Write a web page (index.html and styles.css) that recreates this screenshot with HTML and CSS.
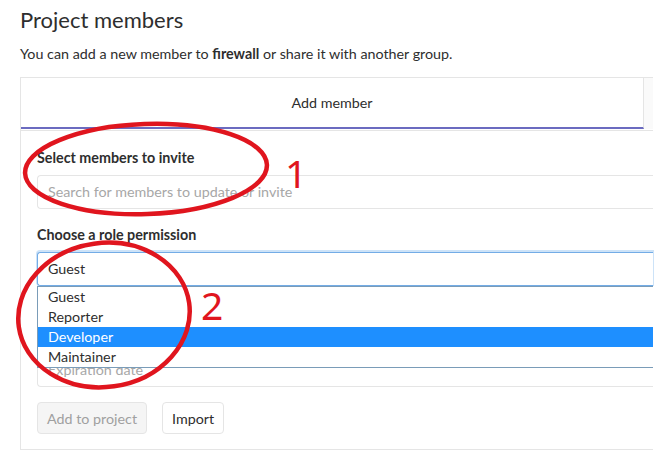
FILE: index.html
```html
<!DOCTYPE html>
<html>
<head>
<meta charset="utf-8">
<link rel="stylesheet" href="styles.css">
</head>
<body>
<h1 class="title">Project members</h1>
<p class="lead">You can add a new member to <strong>firewall</strong> or share it with another group.</p>
<div class="card">
  <div class="tabs">
    <div class="tab tab-active">Add member</div>
    <div class="tab tab-rest"></div>
  </div>
  <div class="card-body">
    <div class="label">Select members to invite</div>
    <div class="input placeholder">Search for members to update or invite</div>
    <div class="label">Choose a role permission</div>
    <div class="select-wrap">
      <div class="select">Guest</div>
      <ul class="dropdown">
        <li class="option">Guest</li>
        <li class="option">Reporter</li>
        <li class="option option-selected">Developer</li>
        <li class="option">Maintainer</li>
      </ul>
    </div>
    <div class="input placeholder expiry">Expiration date</div>
    <div class="actions">
      <button class="btn btn-disabled" disabled>Add to project</button>
      <button class="btn">Import</button>
    </div>
  </div>
</div>
<svg class="annot" width="664" height="468" viewBox="0 0 664 468">
  <ellipse cx="146" cy="169" rx="121" ry="45" transform="rotate(-2 146 169)" class="ring"/>
  <ellipse cx="104" cy="315" rx="86" ry="72" transform="rotate(-8 104 315)" class="ring"/>
  <text x="285" y="188" class="num">1</text>
  <text x="201" y="320" class="num">2</text>
</svg>
</body>
</html>
```
FILE: styles.css
```css
html, body {
  margin: 0;
  padding: 0;
  background: #fff;
}
body {
  font-family: Lato, "Noto Sans", sans-serif;
  color: #2e2e2e;
  padding-left: 20px;
  position: relative;
  height: 468px;
  overflow: hidden;
}
.title {
  margin: 0;
  padding-top: 5px;
  font-size: 22px;
  font-weight: 400;
  line-height: 30px;
}
.lead {
  margin: 9px 0 0;
  font-size: 14.3px;
  line-height: 20px;
}
.lead strong {
  font-weight: 700;
}
.card {
  margin-top: 13px;
  width: 633px;
  border: 1px solid #e5e5e5;
  border-right: none;
  height: 373px;
  box-sizing: border-box;
}
.tabs {
  display: flex;
  height: 52px;
  border-bottom: 1px solid #e5e5e5;
}
.tab {
  box-sizing: border-box;
  height: 51px;
}
.tab-active {
  width: 623px;
  border-right: 1px solid #e5e5e5;
  border-bottom: 2px solid #6b6bc0;
  display: flex;
  align-items: center;
  justify-content: center;
  font-size: 14.3px;
}
.tab-rest {
  flex: 1;
  background: #fafafa;
}
.card-body {
  padding: 17px 0 0 16px;
}
.label {
  font-size: 14.3px;
  font-weight: 700;
  line-height: 20px;
  margin-bottom: 7px;
}
.input {
  height: 34px;
  box-sizing: border-box;
  border: 1px solid #e5e5e5;
  border-right: none;
  border-radius: 4px 0 0 4px;
  font-size: 14.3px;
  line-height: 32px;
  padding-left: 10px;
  margin-bottom: 16px;
}
.placeholder {
  color: #a7a7a7;
}
.select-wrap {
  position: relative;
}
.select {
  height: 34px;
  box-sizing: border-box;
  border: 1px solid #73ace6;
  border-right: none;
  border-radius: 3px 0 0 3px;
  box-shadow: 0 -1px 0 1px #cde3f8;
  font-size: 14.3px;
  line-height: 32px;
  padding-left: 10px;
}
.dropdown {
  position: absolute;
  left: 0;
  right: 0;
  top: 34px;
  margin: 0;
  padding: 0;
  list-style: none;
  background: #fff;
  border: 1px solid #7a9cb8;
  border-right: none;
  z-index: 2;
}
.option {
  height: 20px;
  line-height: 20px;
  font-size: 14.3px;
  padding-left: 10px;
}
.option-selected {
  background: #1e8fff;
  color: #fff;
}
.expiry {
  margin-top: 67px;
  margin-bottom: 15px;
}
.actions {
  display: flex;
  gap: 15px;
}
.btn {
  font-family: inherit;
  font-size: 14.3px;
  height: 32px;
  padding: 0 9px;
  border: 1px solid #e5e5e5;
  border-radius: 4px;
  background: #fff;
  color: #2e2e2e;
}
.btn-disabled {
  background: #f5f5f5;
  color: #a0a0a0;
}
.annot {
  position: absolute;
  left: 0;
  top: 0;
  z-index: 5;
  pointer-events: none;
}
.ring {
  fill: none;
  stroke: #e0151e;
  stroke-width: 4.5;
}
.num {
  fill: #e0151e;
  font-family: "Noto Sans", sans-serif;
  font-size: 39px;
  font-weight: 400;
}
```
